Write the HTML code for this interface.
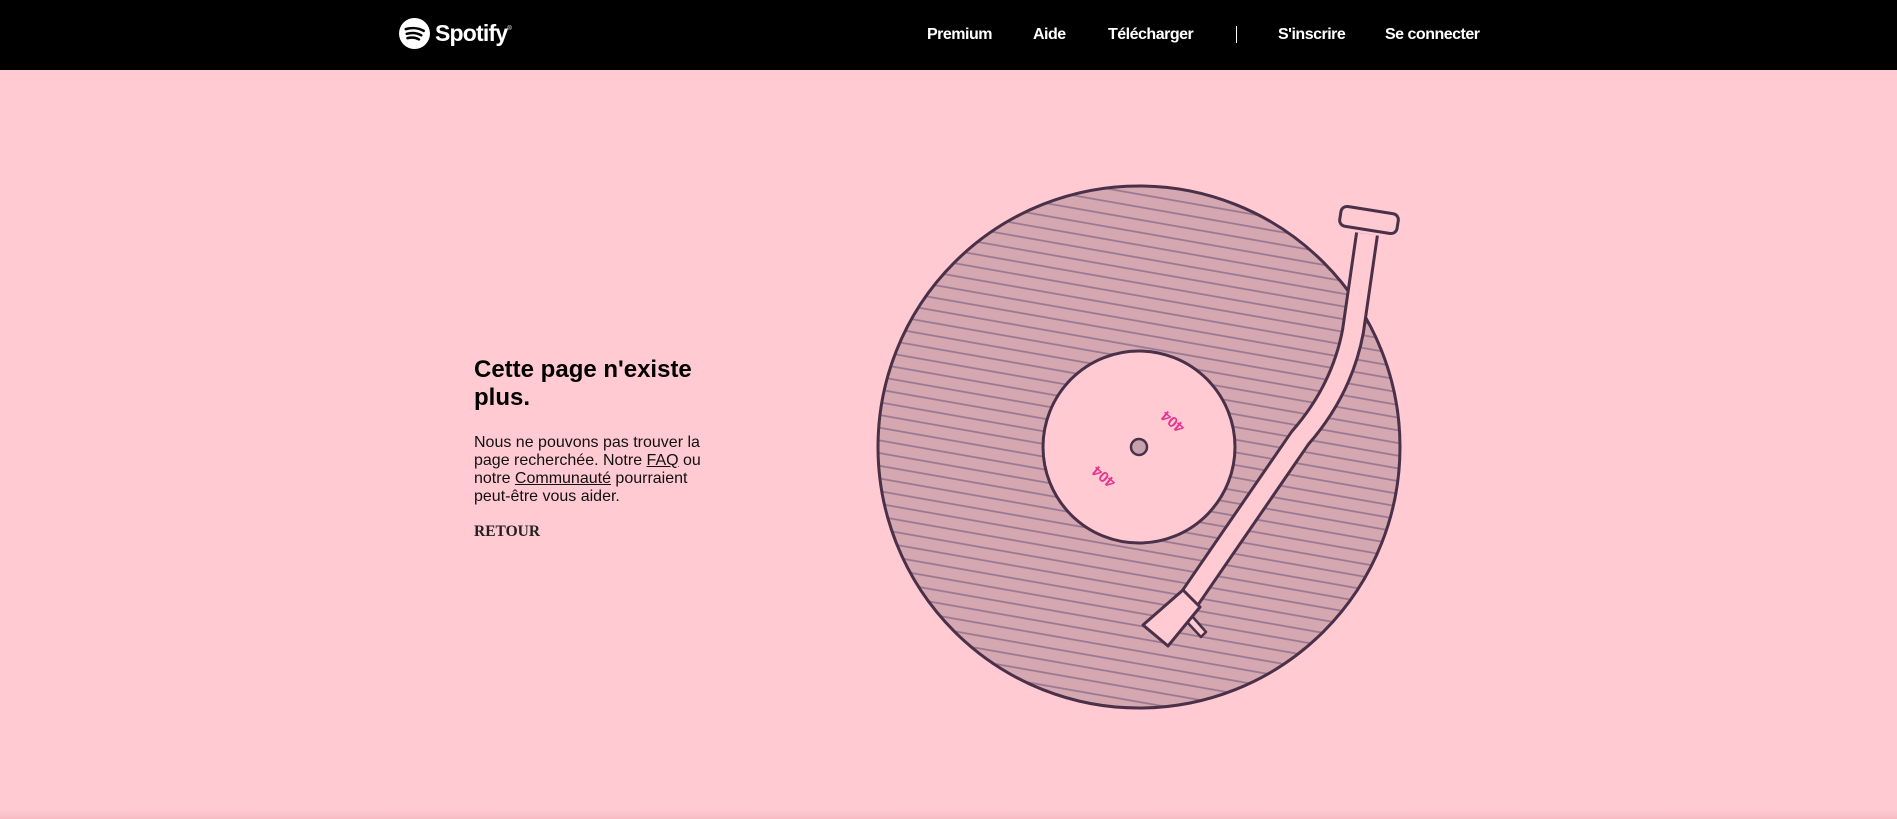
<!DOCTYPE html>
<html><head><meta charset="utf-8"><style>
*{margin:0;padding:0;box-sizing:border-box}
html,body{width:1897px;height:819px;overflow:hidden;background:#ffcad1;font-family:"Liberation Sans",Arial,sans-serif}
.hdr{position:absolute;left:0;top:0;width:1897px;height:70px;background:#000;color:#fff}
.logo{position:absolute;left:399px;top:18px;display:flex;align-items:center}
.logo span{font-weight:bold;font-size:23px;margin-left:5px;letter-spacing:-0.8px}
.nav a{position:absolute;top:26px;font-size:16px;font-weight:bold;color:#fff;text-decoration:none;letter-spacing:-0.5px}
.sep{position:absolute;left:1236px;top:26px;width:1px;height:17px;background:#fff}
.txt{position:absolute;left:474px;top:356px;width:240px;color:#000}
h1{font-size:24px;line-height:28px;font-weight:bold}
p{font-size:16px;line-height:18px;margin-top:22px;color:#111}
p u{text-decoration:underline}
.ret{margin-top:17px;font-family:"Liberation Serif",serif;font-weight:bold;font-size:15.5px;color:#222}
.bot{position:absolute;left:0;top:810px;width:1897px;height:9px;background:linear-gradient(#ffcad1,#f7bcc4)}
</style></head><body>
<div class="hdr">
 <div class="logo"><svg width="31" height="31" viewBox="0 0 32 32"><circle cx="16" cy="16" r="16" fill="#fff"/><path d="M7 11.5c6-1.8 13-1.3 18.5 1.8M8 16.3c5-1.4 10.5-1 15 1.6M8.8 20.8c4-1 8.3-.7 11.8 1.3" stroke="#000" stroke-width="2.6" fill="none" stroke-linecap="round"/></svg><span>Spotify</span><sup style="font-size:6px;margin-top:-10px">®</sup></div>
 <div class="nav">
  <a style="left:927px">Premium</a><a style="left:1033px">Aide</a><a style="left:1108px">Télécharger</a>
  <div class="sep"></div>
  <a style="left:1278px">S'inscrire</a><a style="left:1385px">Se connecter</a>
 </div>
</div>
<div class="txt">
 <h1>Cette page n'existe plus.</h1>
 <p>Nous ne pouvons pas trouver la page recherchée. Notre <u>FAQ</u> ou notre <u>Communauté</u> pourraient peut-être vous aider.</p>
 <div class="ret">RETOUR</div>
</div>
<svg style="position:absolute;left:0;top:0" width="1897" height="819">
 <defs>
  <pattern id="st" width="40" height="12.5" patternUnits="userSpaceOnUse" patternTransform="rotate(10)">
   <rect width="40" height="12.5" fill="#d5a8b1"/>
   <line x1="0" y1="6" x2="40" y2="6" stroke="#9a7790" stroke-width="1.8"/>
  </pattern>
 </defs>
 <circle cx="1139" cy="447" r="261" fill="url(#st)" stroke="#4a3048" stroke-width="3"/>
 <circle cx="1139" cy="447" r="96" fill="#ffcad1" stroke="#4a3048" stroke-width="3"/>
 <circle cx="1139" cy="447" r="8" fill="#c6a2af" stroke="#4a3048" stroke-width="2.5"/>
 <text x="1176" y="418" font-family="Liberation Sans,sans-serif" font-size="15" font-weight="bold" fill="#e8338f" text-anchor="middle" transform="rotate(220 1176 418)">404</text>
 <text x="1107" y="473" font-family="Liberation Sans,sans-serif" font-size="15" font-weight="bold" fill="#e8338f" text-anchor="middle" transform="rotate(220 1107 473)">404</text>
 <path d="M1367 234 L1353 331 Q1342 390 1300 438 L1190 598" fill="none" stroke="#4a3048" stroke-width="24" stroke-linecap="butt" stroke-linejoin="round"/>
 <path d="M1367 234 L1353 331 Q1342 390 1300 438 L1190 598" fill="none" stroke="#ffcad1" stroke-width="18" stroke-linejoin="round"/>
 <g transform="rotate(9 1369 220)"><rect x="1340" y="210" width="58" height="20" rx="6" fill="#ffcad1" stroke="#4a3048" stroke-width="3"/></g>
 <path d="M1192 616 L1206 632 L1201 637 L1187 622 Z" fill="#ffcad1" stroke="#4a3048" stroke-width="2.5" stroke-linejoin="round"/>
 <path d="M1143 625 L1168 646 L1200 607 L1183 590 Z" fill="#ffcad1" stroke="#4a3048" stroke-width="3" stroke-linejoin="round"/>
</svg>
<div class="bot"></div>
</body></html>
